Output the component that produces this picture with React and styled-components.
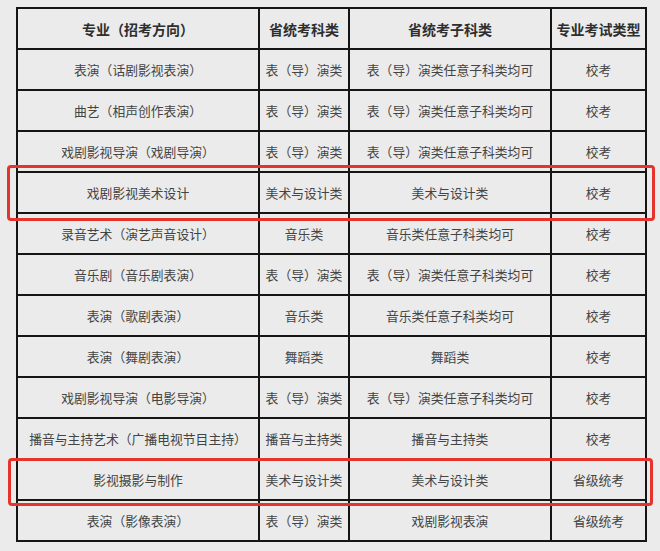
import styled, { createGlobalStyle } from 'styled-components';

const GlobalStyle = createGlobalStyle`
  html, body {
    margin: 0;
    padding: 0;
    background: #ebebeb;
  }
`;

const Page = styled.div`
  position: relative;
  width: 660px;
  height: 551px;
  padding: 7px 0 0 16px;
  box-sizing: border-box;
  font-family: 'Noto Sans CJK SC', 'Noto Sans', sans-serif;
`;

const Table = styled.table`
  border-collapse: collapse;
  table-layout: fixed;
  width: 631px;
`;

const Col = styled.col`
  width: ${(p) => p.w}px;
`;

const Row = styled.tr`
  height: 41px;
`;

const HeadCell = styled.th`
  border: 2px solid #151515;
  padding: 0;
  font-size: 14px;
  font-weight: 600;
  color: #2e2e2e;
  text-align: center;
  white-space: nowrap;
`;

const Cell = styled.td`
  border: 2px solid #151515;
  padding: 0;
  font-size: 12.8px;
  color: #444;
  text-align: center;
  white-space: nowrap;
`;

const Highlight = styled.div`
  position: absolute;
  left: ${(p) => p.x}px;
  top: ${(p) => p.y}px;
  width: ${(p) => p.w}px;
  height: ${(p) => p.h}px;
  border: 3px solid #e6332b;
  border-radius: 4px;
  box-sizing: border-box;
  pointer-events: none;
`;

const headers = ['专业（招考方向）', '省统考科类', '省统考子科类', '专业考试类型'];

const rows = [
  ['表演（话剧影视表演）', '表（导）演类', '表（导）演类任意子科类均可', '校考'],
  ['曲艺（相声创作表演）', '表（导）演类', '表（导）演类任意子科类均可', '校考'],
  ['戏剧影视导演（戏剧导演）', '表（导）演类', '表（导）演类任意子科类均可', '校考'],
  ['戏剧影视美术设计', '美术与设计类', '美术与设计类', '校考'],
  ['录音艺术（演艺声音设计）', '音乐类', '音乐类任意子科类均可', '校考'],
  ['音乐剧（音乐剧表演）', '表（导）演类', '表（导）演类任意子科类均可', '校考'],
  ['表演（歌剧表演）', '音乐类', '音乐类任意子科类均可', '校考'],
  ['表演（舞剧表演）', '舞蹈类', '舞蹈类', '校考'],
  ['戏剧影视导演（电影导演）', '表（导）演类', '表（导）演类任意子科类均可', '校考'],
  ['播音与主持艺术（广播电视节目主持）', '播音与主持类', '播音与主持类', '校考'],
  ['影视摄影与制作', '美术与设计类', '美术与设计类', '省级统考'],
  ['表演（影像表演）', '表（导）演类', '戏剧影视表演', '省级统考'],
];

const widths = [242, 90, 202, 95];

export default function App() {
  return (
    <>
      <GlobalStyle />
      <Page>
        <Table>
          <colgroup>
            {widths.map((w, i) => (
              <Col key={i} w={w} />
            ))}
          </colgroup>
          <thead>
            <Row>
              {headers.map((h) => (
                <HeadCell key={h}>{h}</HeadCell>
              ))}
            </Row>
          </thead>
          <tbody>
            {rows.map((r, i) => (
              <Row key={i}>
                {r.map((c, j) => (
                  <Cell key={j}>{c}</Cell>
                ))}
              </Row>
            ))}
          </tbody>
        </Table>
        <Highlight x={7} y={165} w={648} h={56} />
        <Highlight x={8} y={458} w={645} h={48} />
      </Page>
    </>
  );
}
